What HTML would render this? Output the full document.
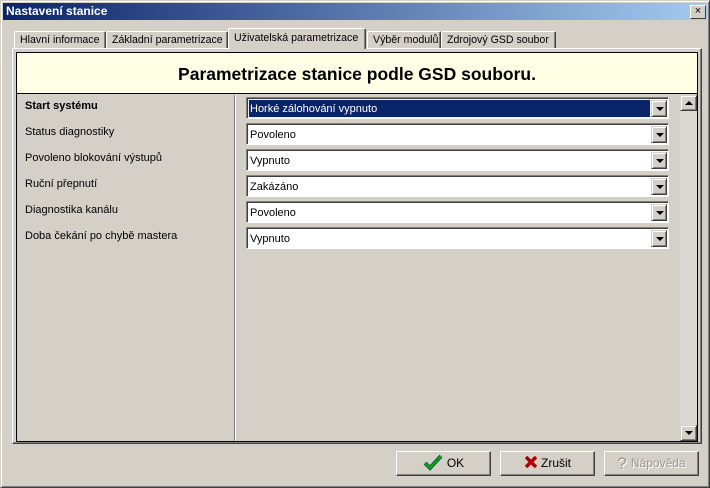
<!DOCTYPE html>
<html><head><meta charset="utf-8"><style>
*{box-sizing:border-box;margin:0;padding:0}
body{width:710px;height:488px;background:#d4d0c8;font-family:"Liberation Sans",sans-serif;font-size:11px;position:relative;overflow:hidden}
.a{position:absolute}
#win{left:0;top:0;width:710px;height:488px;border:1px solid;border-color:#d4d0c8 #404040 #404040 #d4d0c8;box-shadow:inset 1px 1px #fff,inset -1px -1px #808080}
#title{left:3px;top:3px;width:704px;height:17px;background:linear-gradient(90deg,#0a246a,#a6caf0);color:#fff;font-weight:bold;font-size:12px;line-height:17px;padding-left:3px}
#close{left:690px;top:5px;width:16px;height:14px;background:#d4d0c8;border:1px solid;border-color:#fff #404040 #404040 #fff;font-size:11px;line-height:11px;text-align:center;color:#000}
.tab{top:31px;height:18px;border:1px solid;border-color:#fff #404040 transparent #fff;border-bottom:none;line-height:17px;padding-left:5px;white-space:nowrap;border-radius:2px 2px 0 0;box-shadow:inset -1px 0 #808080;font-size:10.6px;overflow:hidden}
.sel{top:28px;height:21px;line-height:18px;background:#d4d0c8;z-index:3}
#panel{left:12px;top:48px;width:690px;height:396px;border:1px solid;border-color:#fff #404040 #404040 #fff;box-shadow:inset -1px -1px #808080}
#inner{left:16px;top:52px;width:682px;height:390px;border:1px solid #000;background:#d4d0c8}
#hdr{left:0;top:0;width:680px;height:41px;background:#ffffe6;border-bottom:1px solid #000;text-align:center;font-weight:bold;font-size:17.5px;line-height:43px}
.lbl{left:8px;font-size:11px}
.cb{left:229px;width:423px;height:22px;border:1px solid;border-color:#808080 #fff #fff #808080;box-shadow:inset 1px 1px #404040;background:#fff;padding:5px 0 0 3px;font-size:11px}
.cb.h span{background:#0a246a;color:#fff;display:block;height:17px;width:401px;outline:1px dotted #ff0;margin:-3px 0 0 -1px;padding:3px 0 0 1px}
.dd{position:absolute;right:1px;top:2px;width:16px;height:17px;background:#d4d0c8;border:1px solid;border-color:#d4d0c8 #404040 #404040 #d4d0c8;box-shadow:inset 1px 1px #fff,inset -1px -1px #808080}
.tri{position:absolute;left:4px;top:6px;width:0;height:0;border-left:4px solid transparent;border-right:4px solid transparent;border-top:4px solid #000}
.triu{position:absolute;left:4px;top:5px;width:0;height:0;border-left:4px solid transparent;border-right:4px solid transparent;border-bottom:4px solid #000}
.btn{top:451px;width:95px;height:25px;border:1px solid;border-color:#fff #404040 #404040 #fff;box-shadow:inset -1px -1px #808080;text-align:center;line-height:23px;font-size:12px}
</style></head><body>
<div id="win" class="a"></div>
<div id="title" class="a">Nastavení stanice</div>
<div id="close" class="a">×</div>
<div class="a tab" style="left:14px;width:92px">Hlavní informace</div>
<div class="a tab" style="left:106px;width:122px">Základní parametrizace</div>
<div class="a tab" style="left:367px;width:74px">Výběr modulů</div>
<div class="a tab" style="left:441px;width:115px">Zdrojový GSD soubor</div>
<div id="panel" class="a"></div>
<div class="a tab sel" style="left:228px;width:138px">Uživatelská parametrizace</div>
<div id="inner" class="a">
 <div id="hdr" class="a">Parametrizace stanice podle GSD souboru.</div>
 <div class="a" style="left:217px;top:42px;width:2px;height:346px;border-left:1px solid #808080;border-right:1px solid #fff"></div>
 <div class="a lbl" style="top:47px;font-weight:bold">Start systému</div>
 <div class="a lbl" style="top:73px">Status diagnostiky</div>
 <div class="a lbl" style="top:99px">Povoleno blokování výstupů</div>
 <div class="a lbl" style="top:125px">Ruční přepnutí</div>
 <div class="a lbl" style="top:151px">Diagnostika kanálu</div>
 <div class="a lbl" style="top:177px">Doba čekání po chybě mastera</div>
 <div class="a cb h" style="top:44px"><span>Horké zálohování vypnuto</span><div class="dd"><div class="tri"></div></div></div>
 <div class="a cb" style="top:70px">Povoleno<div class="dd"><div class="tri"></div></div></div>
 <div class="a cb" style="top:96px">Vypnuto<div class="dd"><div class="tri"></div></div></div>
 <div class="a cb" style="top:122px">Zakázáno<div class="dd"><div class="tri"></div></div></div>
 <div class="a cb" style="top:148px">Povoleno<div class="dd"><div class="tri"></div></div></div>
 <div class="a cb" style="top:174px">Vypnuto<div class="dd"><div class="tri"></div></div></div>
 <div class="a" style="left:663px;top:42px;width:17px;height:346px;background:#dcd9d2">
  <div class="dd" style="right:auto;left:0;top:0;width:17px;height:16px"><div class="triu"></div></div>
  <div class="dd" style="right:auto;left:0;top:330px;width:17px;height:16px"><div class="tri" style="top:5px"></div></div>
 </div>
</div>
<div class="a btn" style="left:396px"><svg width="20" height="18" viewBox="0 0 20 18" style="vertical-align:-4px;margin-right:4px"><path d="M2 10 L7 15 L18 3" stroke="#063" stroke-width="4" fill="none"/><path d="M2 10 L7 15 L18 3" stroke="#1aa01a" stroke-width="2" fill="none"/></svg>OK</div>
<div class="a btn" style="left:500px"><svg width="14" height="14" viewBox="0 0 14 14" style="vertical-align:-2px;margin-right:3px"><path d="M2 2 L12 12 M12 2 L2 12" stroke="#b00000" stroke-width="3.5"/></svg>Zrušit</div>
<div class="a btn" style="left:604px;color:#9a978f;text-shadow:1px 1px #fff"><span style="font-size:17px;vertical-align:-2px;margin-right:4px">?</span>Nápověda</div>
</body></html>
